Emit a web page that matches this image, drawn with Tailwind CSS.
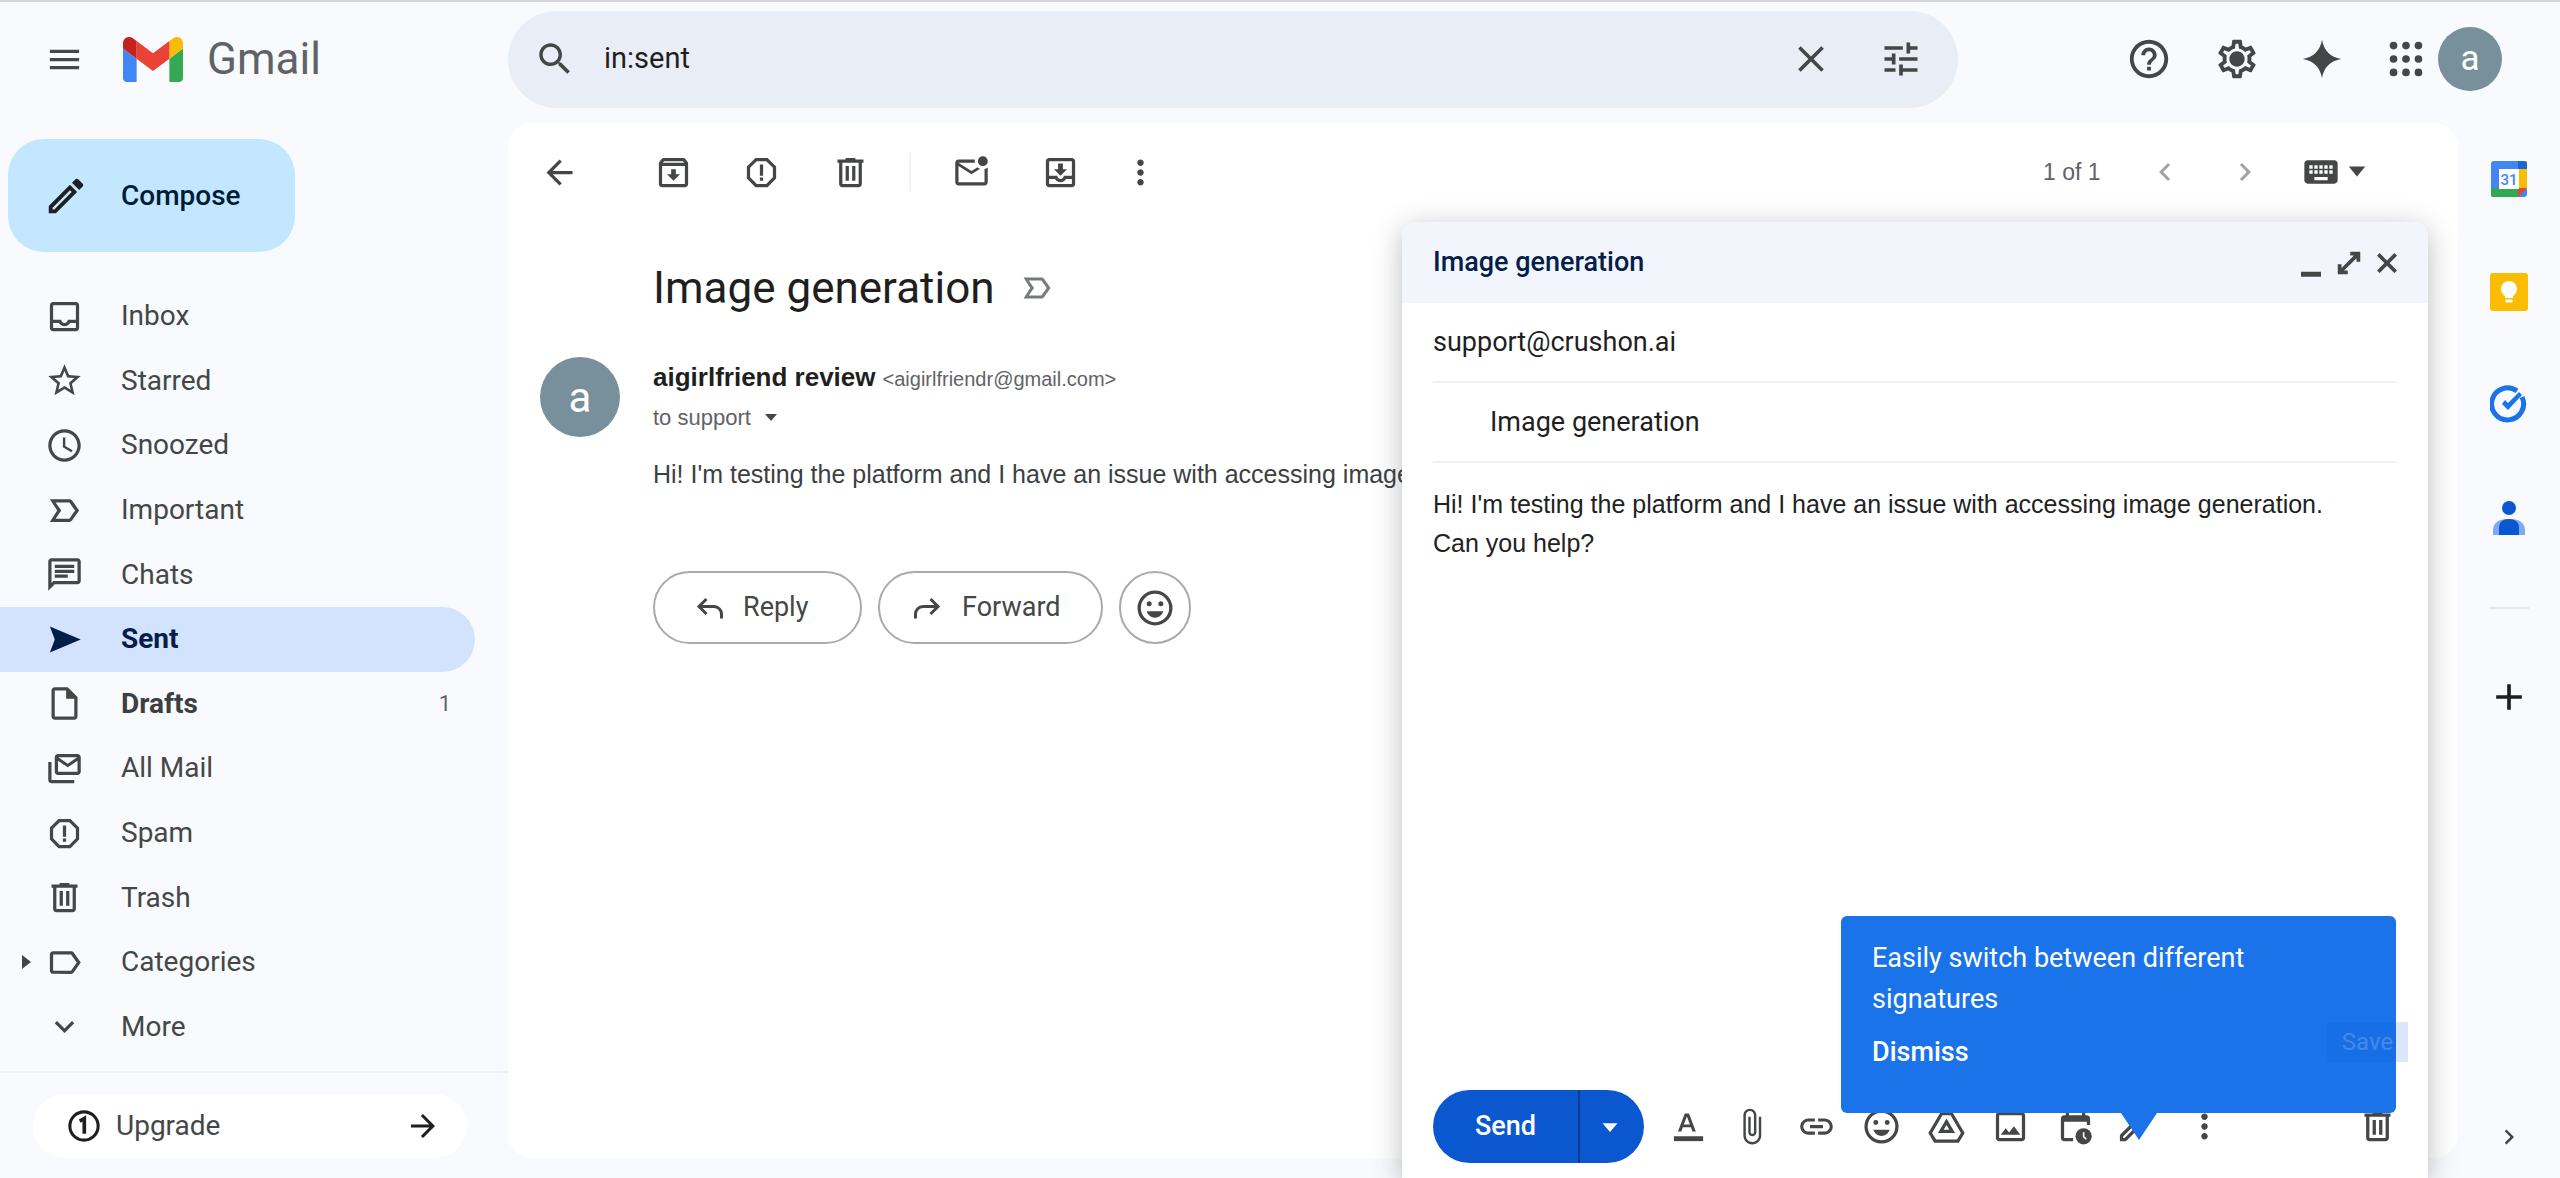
<!DOCTYPE html>
<html lang="en">
<head>
<meta charset="utf-8">
<title>Gmail</title>
<script src="https://cdn.jsdelivr.net/npm/@tailwindcss/browser@4"></script>
</head>
<body class="m-0">
<div class="relative w-[2560px] h-[1178px] overflow-hidden bg-[#f8fafd] font-['Roboto',sans-serif] text-[#444746]">

  <!-- Top bar -->
  <header class="flex items-center h-[123px] pb-[7px] border-t-2 border-[#d5d7dc]">
    <div class="flex items-center w-[508px] shrink-0 pl-[45px]">
      <svg class="w-[39px] h-[39px] fill-[#444746]" viewBox="0 0 24 24"><path d="M3 18h18v-2H3v2zm0-5h18v-2H3v2zm0-7v2h18V6H3z"/></svg>
      <svg class="ml-[39px] w-[60px] h-[45px]" viewBox="52 42 88 66"><path fill="#4285f4" d="M58 108h14V74L52 59v43c0 3.32 2.69 6 6 6"/><path fill="#34a853" d="M120 108h14c3.32 0 6-2.69 6-6V59l-20 15"/><path fill="#fbbc04" d="M120 48v26l20-15v-8c0-7.42-8.47-11.65-14.4-7.2"/><path fill="#ea4335" d="M72 74V48l24 18 24-18v26L96 92"/><path fill="#c5221f" d="M52 51v8l20 15V48l-5.6-4.2c-5.94-4.45-14.4-.22-14.4 7.2"/></svg>
      <span class="ml-[24px] text-[44px] leading-none text-[#5f6368]">Gmail</span>
    </div>
    <div class="flex items-center w-[1450px] h-[97px] shrink-0 rounded-full bg-[#e9eef6] pl-[26px]">
      <svg class="w-[42px] h-[42px] fill-[#444746]" viewBox="0 0 24 24"><path d="M15.5 14h-.79l-.28-.27C15.41 12.59 16 11.11 16 9.5 16 5.91 13.09 3 9.5 3S3 5.91 3 9.5 5.91 16 9.5 16c1.61 0 3.09-.59 4.23-1.57l.27.28v.79l5 4.99L20.49 19l-4.99-5zm-6 0C7.01 14 5 11.99 5 9.5S7.01 5 9.5 5 14 7.01 14 9.5 11.99 14 9.5 14z"/></svg>
      <span class="ml-[28px] text-[29px] text-[#1f1f1f]">in:sent</span>
      <svg class="ml-auto w-[44px] h-[44px] fill-[#444746]" viewBox="0 0 24 24"><path d="M19 6.41 17.59 5 12 10.59 6.41 5 5 6.41 10.59 12 5 17.59 6.41 19 12 13.41 17.59 19 19 17.59 13.41 12z"/></svg>
      <svg class="ml-[46px] mr-[35px] w-[44px] h-[44px] fill-[#444746]" viewBox="0 0 24 24"><path d="M3 17v2h6v-2H3zM3 5v2h10V5H3zm10 16v-2h8v-2h-8v-2h-2v6h2zM7 9v2H3v2h4v2h2V9H7zm14 4v-2H11v2h10zm-6-4h2V7h4V5h-4V3h-2v6z"/></svg>
    </div>
    <svg class="ml-[168px] w-[46px] h-[46px] fill-[#444746]" viewBox="0 0 24 24"><path d="M11 18h2v-2h-2v2zm1-16C6.48 2 2 6.48 2 12s4.48 10 10 10 10-4.48 10-10S17.52 2 12 2zm0 18c-4.41 0-8-3.59-8-8s3.59-8 8-8 8 3.59 8 8-3.59 8-8 8zm0-14c-2.21 0-4 1.79-4 4h2c0-1.1.9-2 2-2s2 .9 2 2c0 2-3 1.75-3 5h2c0-2.25 3-2.5 3-5 0-2.21-1.79-4-4-4z"/></svg>
    <svg class="ml-[42px] w-[46px] h-[46px] fill-[#444746]" viewBox="0 0 24 24"><path d="M19.43 12.98c.04-.32.07-.64.07-.98 0-.34-.03-.66-.07-.98l2.11-1.65c.19-.15.24-.42.12-.64l-2-3.46c-.09-.16-.26-.25-.44-.25-.06 0-.12.01-.17.03l-2.49 1c-.52-.4-1.08-.73-1.69-.98l-.38-2.65C14.46 2.18 14.25 2 14 2h-4c-.25 0-.46.18-.49.42l-.38 2.65c-.61.25-1.17.59-1.69.98l-2.49-1c-.06-.02-.12-.03-.18-.03-.17 0-.34.09-.43.25l-2 3.46c-.13.22-.07.49.12.64l2.11 1.65c-.04.32-.07.65-.07.98 0 .33.03.66.07.98l-2.11 1.65c-.19.15-.24.42-.12.64l2 3.46c.09.16.26.25.44.25.06 0 .12-.01.17-.03l2.49-1c.52.4 1.08.73 1.69.98l.38 2.65c.03.24.24.42.49.42h4c.25 0 .46-.18.49-.42l.38-2.65c.61-.25 1.17-.59 1.69-.98l2.49 1c.06.02.12.03.18.03.17 0 .34-.09.43-.25l2-3.46c.12-.22.07-.49-.12-.64l-2.11-1.65zm-1.98-1.71c.04.31.05.52.05.73 0 .21-.02.43-.05.73l-.14 1.13.89.7 1.08.84-.7 1.21-1.27-.51-1.04-.42-.9.68c-.43.32-.84.56-1.25.73l-1.06.43-.16 1.13-.2 1.35h-1.4l-.19-1.35-.16-1.13-1.06-.43c-.43-.18-.83-.41-1.23-.71l-.91-.7-1.06.43-1.27.51-.7-1.21 1.08-.84.89-.7-.14-1.13c-.03-.31-.05-.54-.05-.74s.02-.43.05-.73l.14-1.13-.89-.7-1.08-.84.7-1.21 1.27.51 1.04.42.9-.68c.43-.32.84-.56 1.25-.73l1.06-.43.16-1.13.2-1.35h1.39l.19 1.35.16 1.13 1.06.43c.43.18.83.41 1.23.71l.91.7 1.06-.43 1.27-.51.7 1.21-1.07.85-.89.7.14 1.13zM12 8c-2.21 0-4 1.79-4 4s1.79 4 4 4 4-1.79 4-4-1.79-4-4-4z"/></svg>
    <svg class="ml-[39px] w-[46px] h-[46px] fill-[#444746]" viewBox="0 0 24 24"><path d="M12 2c.9 5.6 4.4 9.1 10 10-5.6.9-9.1 4.4-10 10-.9-5.6-4.4-9.100-10-10 5.600-.9 9.100-4.400 10-10z"/></svg>
    <svg class="ml-[38px] w-[46px] h-[46px] fill-[#444746]" viewBox="0 0 24 24"><circle cx="5.500" cy="5" r="2"/><circle cx="12" cy="5" r="2"/><circle cx="18.500" cy="5" r="2"/><circle cx="5.500" cy="12" r="2"/><circle cx="12" cy="12" r="2"/><circle cx="18.500" cy="12" r="2"/><circle cx="5.500" cy="19" r="2"/><circle cx="12" cy="19" r="2"/><circle cx="18.500" cy="19" r="2"/></svg>
    <div class="ml-[9px] flex items-center justify-center w-[64px] h-[64px] rounded-full bg-[#78909c] text-white text-[35px]">a</div>
  </header>

  <div class="flex h-[1055px]">
    <!-- Sidebar -->
    <aside class="w-[508px] shrink-0 text-[28px]">
      <div class="ml-[8px] mt-[16px] flex items-center w-[287px] h-[113px] rounded-[36px] bg-[#c2e7ff] pl-[35px] text-[#001d35] font-medium">
        <svg class="w-[46px] h-[46px] fill-[#1f1f1f]" viewBox="0 0 24 24"><path d="M3 17.250V21h3.750L17.810 9.940l-3.750-3.750L3 17.250zM5.920 19H5v-.92l9.060-9.060.92.92L5.920 19zM20.710 5.630l-2.340-2.340c-.2-.2-.45-.29-.71-.29s-.51.1-.7.29l-1.830 1.830 3.750 3.750 1.830-1.830c.39-.39.39-1.020 0-1.410z"/></svg>
        <span class="ml-[32px]">Compose</span>
      </div>
      <nav class="mt-[32px]">
        <div class="flex items-center h-[64.6px] pl-[45px] gap-[37px]"><svg class="w-[39px] h-[39px] fill-[#444746]" viewBox="0 0 24 24"><path d="M19 3H5c-1.100 0-2 .9-2 2v14c0 1.100.9 2 2 2h14c1.100 0 2-.9 2-2V5c0-1.100-.9-2-2-2zm0 16H5v-3h3.560c.69 1.190 1.970 2 3.450 2s2.750-.81 3.450-2H19v3zm0-5h-4.990c0 1.100-.9 2-2 2s-2-.9-2-2H5V5h14v9z"/></svg><span>Inbox</span></div>
        <div class="flex items-center h-[64.6px] pl-[45px] gap-[37px]"><svg class="w-[39px] h-[39px] fill-[#444746]" viewBox="0 0 24 24"><path d="M22 9.240l-7.190-.62L12 2 9.190 8.630 2 9.240l5.460 4.730L5.820 21 12 17.270 18.180 21l-1.630-7.030L22 9.240zM12 15.400l-3.760 2.270 1-4.280-3.320-2.880 4.380-.38L12 6.100l1.710 4.040 4.380.38-3.320 2.880 1 4.280L12 15.400z"/></svg><span>Starred</span></div>
        <div class="flex items-center h-[64.6px] pl-[45px] gap-[37px]"><svg class="w-[39px] h-[39px] fill-[#444746]" viewBox="0 0 24 24"><path d="M11.990 2C6.470 2 2 6.480 2 12s4.470 10 9.990 10C17.520 22 22 17.520 22 12S17.520 2 11.990 2zM12 20c-4.420 0-8-3.580-8-8s3.580-8 8-8 8 3.580 8 8-3.580 8-8 8zm.5-13H11v6l5.250 3.150.75-1.230-4.500-2.670z"/></svg><span>Snoozed</span></div>
        <div class="flex items-center h-[64.6px] pl-[45px] gap-[37px]"><svg class="w-[39px] h-[39px] fill-[#444746]" viewBox="0 0 24 24"><path d="M15 19H3l4.500-7L3 5h12c.65 0 1.260.31 1.630.84L21 12l-4.370 6.160c-.37.52-.98.84-1.630.84zm-8.500-2H15l3.500-5L15 7H6.500l3.500 5-3.500 5z"/></svg><span>Important</span></div>
        <div class="flex items-center h-[64.6px] pl-[45px] gap-[37px]"><svg class="w-[39px] h-[39px] fill-[#444746]" viewBox="0 0 24 24"><path d="M20 2H4c-1.100 0-1.990.9-1.990 2L2 22l4-4h14c1.100 0 2-.9 2-2V4c0-1.100-.9-2-2-2zm0 14H5.170L4 17.170V4h16v12zM6 12h8v2H6zm0-3h12v2H6zm0-3h12v2H6z"/></svg><span>Chats</span></div>
        <div class="flex items-center h-[64.6px] pl-[45px] gap-[37px] w-[475px] rounded-r-full bg-[#d3e3fd] text-[#041e49] font-bold"><svg class="w-[39px] h-[39px] fill-[#041e49]" viewBox="0 0 24 24"><path d="M3 4l19 8-19 8 3-8z"/></svg><span>Sent</span></div>
        <div class="flex items-center h-[64.6px] pl-[45px] gap-[37px] w-[475px] pr-[24px] font-bold text-[#3c3f41]"><svg class="w-[39px] h-[39px] fill-[#444746]" viewBox="0 0 24 24"><path d="M14 2H6c-1.100 0-1.990.9-1.990 2L4 20c0 1.100.89 2 1.990 2H18c1.100 0 2-.9 2-2V8l-6-6zM6 20V4h7v5h5v11H6z"/></svg><span>Drafts</span><span class="ml-auto text-[22px] font-normal text-[#5f6368]">1</span></div>
        <div class="flex items-center h-[64.6px] pl-[45px] gap-[37px]"><svg class="w-[39px] h-[39px] fill-[#444746]" viewBox="0 0 24 24"><path d="M20 3H8c-1.100 0-2 .9-2 2v9c0 1.100.9 2 2 2h12c1.100 0 2-.9 2-2V5c0-1.100-.9-2-2-2zm0 11H8V7.300l6 3.900 6-3.900V14zm-6-5L8.200 5h11.600L14 9zM4 8H2v11c0 1.100.9 2 2 2h14v-2H4V8z"/></svg><span>All Mail</span></div>
        <div class="flex items-center h-[64.6px] pl-[45px] gap-[37px]"><svg class="w-[39px] h-[39px] fill-[#444746]" viewBox="0 0 24 24"><path d="M15.730 3H8.270L3 8.270v7.460L8.270 21h7.460L21 15.730V8.270L15.730 3zM19 14.900L14.900 19H9.100L5 14.900V9.100L9.100 5h5.800L19 9.100v5.800zM11 7h2v7h-2zm0 8h2v2h-2z"/></svg><span>Spam</span></div>
        <div class="flex items-center h-[64.6px] pl-[45px] gap-[37px]"><svg class="w-[39px] h-[39px] fill-[#444746]" viewBox="0 0 24 24"><path d="M15 4V3H9v1H4v2h1v13c0 1.100.9 2 2 2h10c1.100 0 2-.9 2-2V6h1V4h-5zm2 15H7V6h10v13zM9 8h2v9H9zm4 0h2v9h-2z"/></svg><span>Trash</span></div>
        <div class="flex items-center h-[64.6px] pl-[45px] gap-[37px]"><svg class="-ml-[22px] -mr-[37px] w-[11px] h-[16px] fill-[#444746] shrink-0 translate-x-[-2px]" viewBox="0 0 11 16"><path d="M1 1l9 7-9 7z"/></svg><svg class="ml-[11px] w-[39px] h-[39px] fill-[#444746]" viewBox="0 0 24 24"><path d="M17.630 5.840C17.270 5.330 16.670 5 16 5L5 5.010C3.900 5.010 3 5.900 3 7v10c0 1.100.9 1.990 2 1.990L16 19c.67 0 1.270-.33 1.630-.84L22 12l-4.370-6.160zM16 17H5V7h11l3.550 5L16 17z"/></svg><span>Categories</span></div>
        <div class="flex items-center h-[64.6px] pl-[45px] gap-[37px]"><svg class="w-[39px] h-[39px] fill-[#444746]" viewBox="0 0 24 24"><path d="M16.590 8.590L12 13.170 7.410 8.590 6 10l6 6 6-6z"/></svg><span>More</span></div>
      </nav>
      <div class="mt-[12px] h-[2px] bg-[#eef1f6]"></div>
      <div class="ml-[33px] mt-[21px] flex items-center w-[434px] h-[64px] rounded-full bg-white pl-[34px] pr-[26px]">
        <svg class="w-[34px] h-[34px]" viewBox="0 0 24 24" fill="none" stroke="#1f1f1f" stroke-width="2.200"><circle cx="12" cy="12" r="10"/><path d="M9 8.500l3.200-1.800V17.500" stroke-width="2.600"/></svg>
        <span class="ml-[15px] text-[#444746]">Upgrade</span>
        <svg class="ml-auto w-[36px] h-[36px] fill-[#1f1f1f]" viewBox="0 0 24 24"><path d="M12 4l-1.410 1.410L16.170 11H4v2h12.170l-5.580 5.590L12 20l8-8z"/></svg>
      </div>
    </aside>

    <!-- Message card -->
    <main class="w-[1950px] h-[1035px] shrink-0 rounded-[24px] bg-white overflow-hidden">
      <div class="flex items-center h-[98px] pl-[32px]">
        <svg class="w-[39px] h-[39px] fill-[#444746]" viewBox="0 0 24 24"><path d="M20 11H7.830l5.590-5.590L12 4l-8 8 8 8 1.410-1.410L7.830 13H20v-2z"/></svg>
        <svg class="ml-[75px] w-[39px] h-[39px] fill-[#444746]" viewBox="0 0 24 24"><path d="M20.540 5.230l-1.390-1.680C18.880 3.210 18.470 3 18 3H6c-.47 0-.88.21-1.160.55L3.460 5.230C3.170 5.570 3 6.020 3 6.500V19c0 1.100.9 2 2 2h14c1.100 0 2-.9 2-2V6.500c0-.48-.17-.93-.46-1.270zM6.240 5h11.520l.83 1H5.420l.82-1zM5 19V8h14v11H5zm8.450-9h-2.900v3H8l4 4 4-4h-2.550z"/></svg>
        <svg class="ml-[49px] w-[39px] h-[39px] fill-[#444746]" viewBox="0 0 24 24"><path d="M15.730 3H8.270L3 8.270v7.460L8.270 21h7.460L21 15.730V8.270L15.730 3zM19 14.900L14.900 19H9.100L5 14.900V9.100L9.100 5h5.800L19 9.100v5.800zM11 7h2v7h-2zm0 8h2v2h-2z"/></svg>
        <svg class="ml-[50px] w-[39px] h-[39px] fill-[#444746]" viewBox="0 0 24 24"><path d="M15 4V3H9v1H4v2h1v13c0 1.100.9 2 2 2h10c1.100 0 2-.9 2-2V6h1V4h-5zm2 15H7V6h10v13zM9 8h2v9H9zm4 0h2v9h-2z"/></svg>
        <div class="ml-[39px] w-[2px] h-[38px] bg-[#f1f3f4]"></div>
        <svg class="ml-[41px] w-[39px] h-[39px] fill-[#444746]" viewBox="0 0 24 24"><path d="M22 8.980V18c0 1.100-.9 2-2 2H4c-1.100 0-2-.9-2-2V6c0-1.100.9-2 2-2h10.100c-.06.32-.1.66-.1 1s.04.68.1 1H4l8 5 3.670-2.290c.47.43 1.020.76 1.630.98L12 13 4 8v10h16V9.900c.74-.15 1.420-.48 2-.92zM16 5c0 1.660 1.340 3 3 3s3-1.340 3-3-1.340-3-3-3-3 1.340-3 3z"/></svg>
        <svg class="ml-[50px] w-[39px] h-[39px] fill-[#444746]" viewBox="0 0 24 24"><path d="M19 3H5c-1.100 0-2 .9-2 2v14c0 1.100.9 2 2 2h14c1.100 0 2-.9 2-2V5c0-1.100-.9-2-2-2zm0 16H5v-3h3.560c.69 1.190 1.970 2 3.450 2s2.750-.81 3.450-2H19v3zm0-5h-4.990c0 1.100-.9 2-2 2s-2-.9-2-2H5V5h14v9zm-3-4h-2.500V6.500h-3V10H8l4 4 4-4z"/></svg>
        <svg class="ml-[41px] w-[39px] h-[39px] fill-[#444746]" viewBox="0 0 24 24"><path d="M12 8c1.100 0 2-.9 2-2s-.9-2-2-2-2 .9-2 2 .9 2 2 2zm0 2c-1.100 0-2 .9-2 2s.9 2 2 2 2-.9 2-2-.9-2-2-2zm0 6c-1.100 0-2 .9-2 2s.9 2 2 2 2-.9 2-2-.9-2-2-2z"/></svg>
        <span class="ml-[883px] text-[23px] text-[#5f6368] font-['Liberation_Sans',sans-serif]">1 of 1</span>
        <svg class="ml-[46px] w-[36px] h-[36px] fill-[#a0a4a8]" viewBox="0 0 24 24"><path d="M15.410 7.410L14 6l-6 6 6 6 1.410-1.410L10.830 12z"/></svg>
        <svg class="ml-[44px] w-[36px] h-[36px] fill-[#a0a4a8]" viewBox="0 0 24 24"><path d="M10 6L8.590 7.410 13.170 12l-4.580 4.590L10 18l6-6z"/></svg>
        <svg class="ml-[38px] w-[40px] h-[40px] fill-[#444746]" viewBox="0 0 24 24"><path d="M20 5H4c-1.100 0-1.990.9-1.990 2L2 17c0 1.100.9 2 2 2h16c1.100 0 2-.9 2-2V7c0-1.100-.9-2-2-2zm-9 3h2v2h-2V8zm0 3h2v2h-2v-2zM8 8h2v2H8V8zm0 3h2v2H8v-2zm-1 2H5v-2h2v2zm0-3H5V8h2v2zm9 7H8v-2h8v2zm0-4h-2v-2h2v2zm0-3h-2V8h2v2zm3 3h-2v-2h2v2zm0-3h-2V8h2v2z"/></svg>
        <svg class="ml-[5px] w-[22px] h-[22px] fill-[#444746]" viewBox="0 0 24 24"><path d="M3 6h18L12 17z"/></svg>
      </div>
      <div class="flex items-center h-[68px] mt-[33px] pl-[145px]">
        <span class="text-[44px] leading-none text-[#1f1f1f] font-normal">Image generation</span>
        <svg class="ml-[24px] w-[36px] h-[36px] fill-[#777b7f]" viewBox="0 0 24 24"><path d="M15 19H3l4.500-7L3 5h12c.65 0 1.260.31 1.630.84L21 12l-4.370 6.160c-.37.52-.98.84-1.630.84zm-8.500-2H15l3.500-5L15 7H6.500l3.500 5-3.500 5z"/></svg>
      </div>
      <div class="flex items-start mt-[35px] pl-[32px] font-['Liberation_Sans',sans-serif]">
        <div class="flex items-center justify-center w-[80px] h-[80px] shrink-0 rounded-full bg-[#78909c] text-white text-[42px] font-['Roboto',sans-serif]">a</div>
        <div class="ml-[33px] whitespace-nowrap">
          <div class="flex items-baseline h-[40px] leading-[40px]"><span class="text-[26px] font-bold text-[#1f1f1f]">aigirlfriend review</span><span class="ml-[7px] text-[20px] text-[#5f6368]">&lt;aigirlfriendr@gmail.com&gt;</span></div>
          <div class="flex items-center h-[40px] text-[22px] text-[#5f6368]">to support<svg class="ml-[8px] w-[24px] h-[24px] fill-[#444746]" viewBox="0 0 24 24"><path d="M6 9h12l-6 7z"/></svg></div>
          <div class="mt-[17px] h-[40px] leading-[40px] text-[25px] text-[#3c4043]">Hi! I'm testing the platform and I have an issue with accessing image generation.</div>
          <div class="flex items-center mt-[77px] text-[27px] font-['Roboto',sans-serif] text-[#444746]">
            <div class="flex items-center w-[209px] h-[73px] rounded-full border-2 border-[#a8abad] pl-[38px]"><svg class="w-[36px] h-[36px]" viewBox="0 0 24 24" fill="none" stroke="#444746" stroke-width="2"><path d="M9 6l-5 5 5 5M4 11h10a5 5 0 0 1 5 5v3"/></svg><span class="ml-[14px]">Reply</span></div>
            <div class="ml-[16px] flex items-center w-[225px] h-[73px] rounded-full border-2 border-[#a8abad] pl-[28px]"><svg class="w-[36px] h-[36px]" viewBox="0 0 24 24" fill="none" stroke="#444746" stroke-width="2"><path d="M15 6l5 5-5 5M20 11H10a5 5 0 0 0-5 5v3"/></svg><span class="ml-[18px]">Forward</span></div>
            <div class="ml-[16px] flex items-center justify-center w-[72px] h-[73px] rounded-full border-2 border-[#a8abad]"><svg class="w-[40px] h-[40px]" viewBox="0 0 24 24"><circle cx="12" cy="12" r="9.500" fill="none" stroke="#444746" stroke-width="2"/><circle cx="8.500" cy="9.500" r="1.500" fill="#444746"/><circle cx="15.500" cy="9.500" r="1.500" fill="#444746"/><path d="M7 14h10c-.8 2.400-2.800 3.800-5 3.800S7.800 16.400 7 14z" fill="#444746"/></svg></div>
          </div>
        </div>
      </div>
    </main>

    <!-- Right rail -->
    <aside class="w-[102px] flex flex-col items-center relative">
      <svg class="mt-[37px] w-[38px] h-[38px]" viewBox="0 0 38 38"><rect x="1" y="1" width="36" height="36" rx="3" fill="#4285f4"/><rect x="28" y="1" width="9" height="28" fill="#fbbc04"/><rect x="1" y="28" width="28" height="9" rx="2" fill="#34a853"/><path d="M28 37v-9h9z" fill="#ea4335"/><rect x="9" y="9" width="20" height="20" fill="#fff"/><path d="M28 1h6a3 3 0 0 1 3 3v5h-9z" fill="#1967d2"/><text x="19" y="25" font-family="Roboto,sans-serif" font-size="15" font-weight="500" text-anchor="middle" fill="#4285f4">31</text></svg>
      <svg class="mt-[75px] w-[38px] h-[38px]" viewBox="0 0 38 38"><rect width="38" height="38" rx="3" fill="#fbbc04"/><circle cx="19" cy="16" r="8" fill="#fff"/><rect x="15" y="20" width="8" height="5" fill="#fff"/><rect x="15.500" y="26.500" width="7" height="3" fill="#fff"/></svg>
      <svg class="mt-[74px] w-[38px] h-[38px]" viewBox="0 0 38 38"><path d="M32 12a16 16 0 1 1-5-6" fill="none" stroke="#1a73e8" stroke-width="5"/><path d="M12 19l6 6 14-15-3-3-11 11-3-3z" fill="#1a73e8"/></svg>
      <svg class="mt-[76px] w-[34px] h-[38px]" viewBox="0 0 34 38"><circle cx="17" cy="9" r="7" fill="#0b57d0"/><path d="M1 36v-5c0-8 7-11 16-11s16 3 16 11v5z" fill="#7baaf7"/><path d="M7 36v-7c0-6 4-9 10-9s10 3 10 9v7z" fill="#0b57d0"/></svg>
      <div class="mt-[70px] w-[40px] h-[2px] bg-[#e3e6ea]"></div>
      <svg class="mt-[66px] w-[44px] h-[44px] fill-[#1f1f1f]" viewBox="0 0 24 24"><path d="M19 13h-6v6h-2v-6H5v-2h6V5h2v6h6z"/></svg>
      <svg class="mt-auto mb-[26px] w-[30px] h-[30px] fill-[#444746]" viewBox="0 0 24 24"><path d="M10 6L8.590 7.410 13.170 12l-4.580 4.590L10 18l6-6z"/></svg>
    </aside>
  </div>

  <!-- Compose window -->
  <section class="absolute left-[1402px] top-[222px] bottom-0 w-[1026px] flex flex-col rounded-t-[14px] bg-white shadow-[0_6px_28px_rgba(60,64,67,0.35)] font-['Liberation_Sans',sans-serif]">
    <div class="flex items-center h-[81px] shrink-0 rounded-t-[14px] bg-[#f2f6fc] pl-[31px] pr-[26px] font-['Roboto',sans-serif]">
      <span class="text-[27px] font-medium text-[#041e49]">Image generation</span>
      <svg class="ml-auto mt-[10px] w-[30px] h-[30px] fill-[#444746]" viewBox="0 0 24 24"><path d="M4 15h16v4H4z"/></svg>
      <svg class="ml-[8px] w-[30px] h-[30px] fill-[#444746]" viewBox="0 0 24 24"><path d="M21 3v8h-3V8.100l-9.900 9.900H11v3H3v-8h3v2.900L15.900 6H13V3z"/></svg>
      <svg class="ml-[8px] w-[30px] h-[30px] fill-[#444746]" viewBox="0 0 24 24"><path d="M20 6.100 17.900 4 12 9.900 6.100 4 4 6.100 9.900 12 4 17.900 6.100 20 12 14.100 17.900 20 20 17.900 14.100 12z"/></svg>
    </div>
    <div class="flex items-center h-[80px] mx-[31px] border-b-2 border-[#f0f1f2] font-['Roboto',sans-serif] text-[27px] text-[#1f1f1f]">support@crushon.ai</div>
    <div class="flex items-center h-[80px] mx-[31px] pl-[57px] border-b-2 border-[#f0f1f2] font-['Roboto',sans-serif] text-[27px] text-[#1f1f1f]">Image generation</div>
    <div class="mx-[31px] mt-[22px] text-[25px] leading-[39px] text-[#222222]">Hi! I'm testing the platform and I have an issue with accessing image generation.<br>Can you help?</div>
    <div class="mt-auto mb-[15px] ml-[31px] flex items-center h-[73px]">
      <div class="flex items-center w-[211px] h-[73px] rounded-full bg-[#0b57d0] text-white font-['Roboto',sans-serif] font-medium text-[27px]">
        <span class="w-[145px] text-center">Send</span>
        <div class="w-[2px] h-[73px] bg-[#083b8c]"></div>
        <svg class="ml-[15px] w-[30px] h-[30px] fill-white" viewBox="0 0 24 24"><path d="M6 9h12l-6 7z"/></svg>
      </div>
      <svg class="ml-[25px] w-[39px] h-[39px]" viewBox="0 0 24 24"><path d="M9.700 4h2.600l4.200 11h-2.100l-.9-2.600H8.500L7.600 15H5.500zM9.100 10.700h3.800L11 5.800z" fill="#444746"/><rect x="3" y="18" width="18" height="3" fill="#444746"/></svg>
      <svg class="ml-[24px] w-[39px] h-[39px] fill-[#444746]" viewBox="0 0 24 24"><path d="M16.500 6v11.500c0 2.210-1.790 4-4 4s-4-1.790-4-4V5c0-1.380 1.120-2.500 2.500-2.500s2.500 1.120 2.500 2.500v10.500c0 .55-.45 1-1 1s-1-.45-1-1V6H10v9.500c0 1.380 1.120 2.500 2.500 2.500s2.500-1.120 2.500-2.500V5c0-2.210-1.790-4-4-4S7 2.790 7 5v12.500c0 3.040 2.460 5.500 5.500 5.500s5.500-2.460 5.500-5.500V6h-1.500z"/></svg>
      <svg class="ml-[26px] w-[39px] h-[39px] fill-[#444746]" viewBox="0 0 24 24"><path d="M3.900 12c0-1.710 1.390-3.100 3.100-3.100h4V7H7c-2.760 0-5 2.240-5 5s2.240 5 5 5h4v-1.900H7c-1.710 0-3.100-1.390-3.100-3.100zM8 13h8v-2H8v2zm9-6h-4v1.900h4c1.710 0 3.100 1.390 3.100 3.100s-1.390 3.100-3.100 3.100h-4V17h4c2.760 0 5-2.240 5-5s-2.240-5-5-5z"/></svg>
      <svg class="ml-[26px] w-[39px] h-[39px]" viewBox="0 0 24 24"><circle cx="12" cy="12" r="9.500" fill="none" stroke="#444746" stroke-width="2"/><circle cx="8.500" cy="9.500" r="1.500" fill="#444746"/><circle cx="15.500" cy="9.500" r="1.500" fill="#444746"/><path d="M7 14h10c-.8 2.400-2.800 3.800-5 3.800S7.800 16.400 7 14z" fill="#444746"/></svg>
      <svg class="ml-[26px] w-[39px] h-[39px]" viewBox="0 0 24 24" fill="none" stroke="#444746" stroke-width="2"><path d="M9 4h6l7 12-3 5H5l-3-5zM12 9l3.500 6h-7z"/></svg>
      <svg class="ml-[25px] w-[39px] h-[39px] fill-[#444746]" viewBox="0 0 24 24"><path d="M19 5v14H5V5h14m0-2H5c-1.100 0-2 .9-2 2v14c0 1.100.9 2 2 2h14c1.100 0 2-.9 2-2V5c0-1.100-.9-2-2-2zm-4.860 8.860l-3 3.870L9 13.140 6 17h12l-3.860-5.140z"/></svg>
      <svg class="ml-[26px] w-[39px] h-[39px] fill-[#444746]" viewBox="0 0 24 24"><path d="M19 5h-1V2h-2v3H8V2H6v3H5c-1.100 0-2 .9-2 2v12c0 1.100.9 2 2 2h5.500v-2H5V9h14v2h2V7c0-1.100-.9-2-2-2z"/><circle cx="17" cy="18" r="5"/><path d="M16.500 15.500h1V18l1.500 1.500-.7.7-1.800-1.800z" fill="#fff"/></svg>
      <svg class="ml-[20px] w-[39px] h-[39px] fill-[#444746]" viewBox="0 0 24 24"><path d="M3 17.250V21h3.750L17.810 9.940l-3.750-3.750L3 17.250zM5.920 19H5v-.92l9.060-9.060.92.92L5.920 19z"/></svg>
      <svg class="ml-[31px] w-[39px] h-[39px] fill-[#444746]" viewBox="0 0 24 24"><path d="M12 8c1.100 0 2-.9 2-2s-.9-2-2-2-2 .9-2 2 .9 2 2 2zm0 2c-1.100 0-2 .9-2 2s.9 2 2 2 2-.9 2-2-.9-2-2-2zm0 6c-1.100 0-2 .9-2 2s.9 2 2 2 2-.9 2-2-.9-2-2-2z"/></svg>
      <svg class="ml-[134px] w-[39px] h-[39px] fill-[#444746]" viewBox="0 0 24 24"><path d="M15 4V3H9v1H4v2h1v13c0 1.100.9 2 2 2h10c1.100 0 2-.9 2-2V6h1V4h-5zm2 15H7V6h10v13zM9 8h2v9H9zm4 0h2v9h-2z"/></svg>
    </div>
  </section>

  <!-- Signature tooltip -->
  <div class="absolute left-[1841px] top-[916px] w-[555px] h-[197px] rounded-[6px] bg-[#1a73e8] pl-[31px] pt-[22px] text-white text-[27px] leading-[41px] font-['Roboto',sans-serif]">
    <div>Easily switch between different<br>signatures</div>
    <div class="mt-[12px] font-medium">Dismiss</div>
    <div class="absolute left-[280px] top-[197px] w-0 h-0 border-x-[18px] border-x-transparent border-t-[27px] border-t-[#1a73e8]"></div>
  </div>
  <div class="absolute left-[2327px] top-[1022px] flex items-center justify-center w-[81px] h-[40px] bg-[#0b57d0]/15 text-[24px] font-['Roboto',sans-serif] text-white/20">Save</div>
</div>
</body>
</html>
